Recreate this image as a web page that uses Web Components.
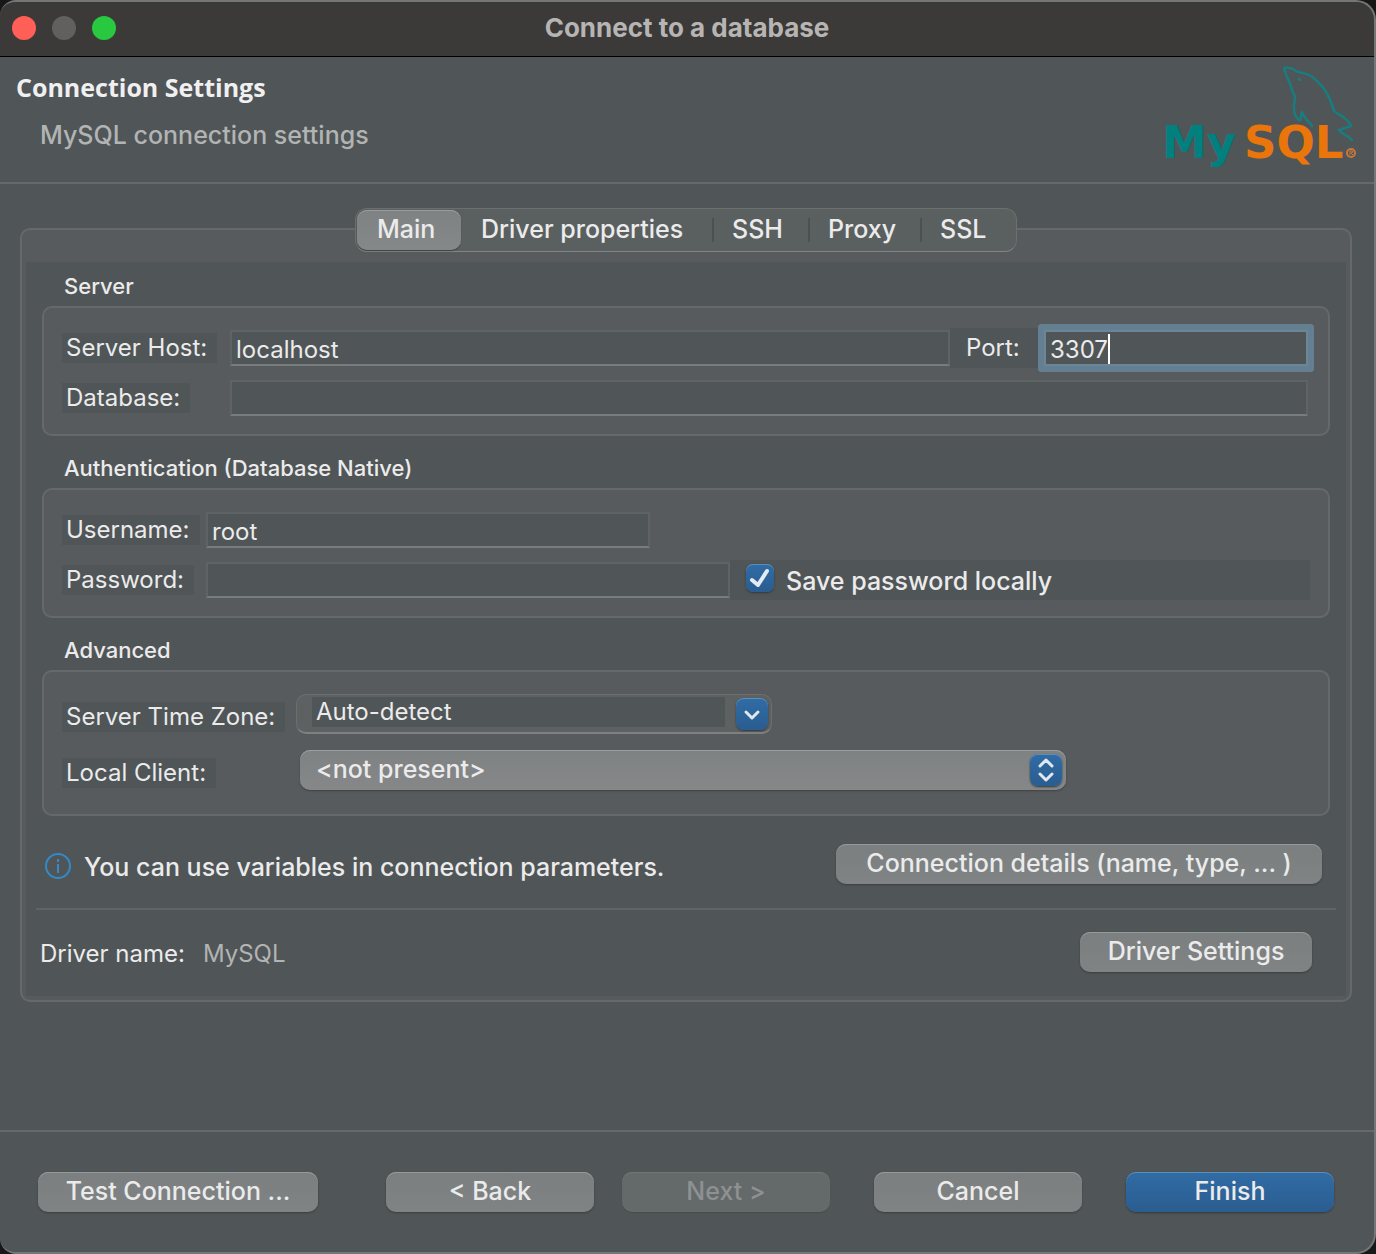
<!DOCTYPE html>
<html lang="en">
<head>
<meta charset="utf-8">
<title>Connect to a database</title>
<style>
  :root {
    --bg: #505557;
    --raised: #575b5d;
    --line: #65696b;
    --text: #ebebeb;
    --muted: #b2b4b4;
    --blue-a: #306ca5;
    --blue-b: #2a5d90;
    --fs-title: 26px;
    --fs-body: 25px;
    --fs-label: 24px;
    --fs-caption: 22px;
  }
  html, body { margin: 0; min-height: 100vh; background: #181818; }
  body { font-family: Inter, "Liberation Sans", sans-serif; font-weight: 500; color: var(--text); font-size: var(--fs-body); }
</style>
</head>
<body>
<dialog-window heading="Connect to a database">
  <page-banner slot="banner" heading="Connection Settings" note="MySQL connection settings"></page-banner>

  <tab-folder>
    <tab-item slot="tabs" selected style="--w:104px">Main</tab-item>
    <tab-item slot="tabs" style="--w:251px">Driver properties</tab-item>
    <tab-item slot="tabs" divided style="--w:96px">SSH</tab-item>
    <tab-item slot="tabs" divided style="--w:112px">Proxy</tab-item>
    <tab-item slot="tabs" divided style="--w:96px">SSL</tab-item>

    <field-group caption="Server" style="--label-col:168px">
      <field-row>
        <text-field label="Server Host:" value="localhost" style="flex:1"></text-field>
        <text-field strip focused label="Port:" value="3307" style="--label-col:94px;flex:0 0 358px"></text-field>
      </field-row>
      <field-row>
        <text-field label="Database:" value="" style="flex:1"></text-field>
      </field-row>
    </field-group>

    <field-group caption="Authentication (Database Native)" style="--label-col:144px">
      <field-row>
        <text-field label="Username:" value="root" style="flex:0 0 588px"></text-field>
      </field-row>
      <field-row>
        <text-field label="Password:" type="password" value="" style="flex:0 0 668px"></text-field>
        <check-field checked label="Save password locally"></check-field>
      </field-row>
    </field-group>

    <field-group caption="Advanced" style="--pad-top:22px;--pad-bottom:24px;--row-gap:16px">
      <field-row>
        <select-field kind="combo" label="Server Time Zone:" option="Auto-detect" style="--label-col:234px;flex:0 0 710px"></select-field>
      </field-row>
      <field-row>
        <select-field kind="popup" label="Local Client:" option="&lt;not present&gt;" style="--label-col:238px;flex:0 0 1004px"></select-field>
      </field-row>
    </field-group>

    <info-row>
      You can use variables in connection parameters.
      <push-button slot="action" style="--w:486px">Connection details (name, type, ... )</push-button>
    </info-row>
    <driver-row name="Driver name:" value="MySQL">
      <push-button style="--w:232px">Driver Settings</push-button>
    </driver-row>
  </tab-folder>

  <button-bar slot="footer">
    <push-button slot="start" style="--w:280px">Test Connection ...</push-button>
    <push-button slot="nav" style="--w:208px">&lt; Back</push-button>
    <push-button slot="nav" disabled style="--w:208px">Next &gt;</push-button>
    <push-button style="--w:208px">Cancel</push-button>
    <push-button primary style="--w:208px">Finish</push-button>
  </button-bar>
</dialog-window>

<script>
const reset = '*{box-sizing:border-box}button,input,select{font:inherit;color:inherit;margin:0}';

function define(name, render) {
  customElements.define(name, class extends HTMLElement {
    constructor() {
      super();
      this.attachShadow({ mode: 'open' });
    }
    connectedCallback() {
      const attr = key => (this.getAttribute(key) || '').replace(/&/g, '&amp;').replace(/</g, '&lt;').replace(/"/g, '&quot;');
      this.shadowRoot.innerHTML = render(attr, this);
    }
  });
}

define('dialog-window', a => `
  <style>${reset}
    :host{display:flex;flex-direction:column;box-sizing:border-box;min-height:100vh;background:var(--bg);
      border:solid #747777;border-width:2px 2px 2px 0;border-radius:16px 20px 20px 16px;overflow:hidden}
    header{display:grid;grid-template-columns:1fr auto 1fr;align-items:center;height:55px;padding:0 12px 3px;
      background:#3c3a38;border-bottom:1px solid #000}
    .lights{display:flex;gap:16px}
    .lights button{width:24px;height:24px;border:0;padding:0;border-radius:50%;background:var(--c)}
    h1{margin:0;font-size:var(--fs-title);line-height:32px;font-weight:700;color:#b7b5b4}
    main{flex:1;padding:24px 22px 24px 20px}
  </style>
  <header>
    <div class="lights">
      <button aria-label="Close" style="--c:#ff5f57"></button>
      <button aria-label="Minimize" disabled style="--c:#60605e"></button>
      <button aria-label="Zoom" style="--c:#28c840"></button>
    </div>
    <h1>${a('heading')}</h1>
  </header>
  <slot name="banner"></slot>
  <main><slot></slot></main>
  <slot name="footer"></slot>`);

define('page-banner', a => `
  <style>${reset}
    :host{display:flex;justify-content:space-between;height:127px;box-sizing:border-box;padding:8px 16px 0 16px;border-bottom:2px solid var(--line)}
    h2{margin:6px 0 0;font:700 var(--fs-body)/32px "Open Sans","Noto Sans",sans-serif;color:#f0f0f0}
    p{margin:16px 0 0 24px;font-size:var(--fs-body);line-height:32px;color:var(--muted)}
    svg{display:block;flex:none}
    text{font:700 45px "DejaVu Sans",sans-serif}
  </style>
  <div><h2>${a('heading')}</h2><p>${a('note')}</p></div>
  <svg width="200" height="106" viewBox="1158 65 200 106" role="img" aria-label="MySQL logo">
    <g fill="none" stroke="#1a7c7e" stroke-width="2.6" stroke-linejoin="round" stroke-linecap="round">
      <path d="M1285 71C1282 68 1286 67 1289 68C1293 68 1295 71 1298 72C1306 73 1312 76 1316 80C1326 89 1330 98 1334 111C1340 116 1347 117 1351 126L1339 130C1341 134 1348 135 1352 140"/>
      <path d="M1285 71C1287 79 1291 83 1292 90C1293 94 1296 95 1295 99C1293 107 1294 114 1297 118C1301 123 1300 120 1302 112C1305 120 1309 121 1312 126"/>
      <path d="M1299 79L1300 80"/>
    </g>
    <text x="1162" y="158" fill="#00807f">My</text>
    <text x="1244" y="158" fill="#e9750b">SQL</text>
    <g stroke="#c87838" fill="none" stroke-width="2"><circle cx="1351" cy="153" r="4"/><path d="M1350 155v-4h2l1 1-2 1 2 2" stroke-width="1"/></g>
  </svg>`);

define('tab-folder', () => `
  <style>${reset}
    :host{display:flex;flex-direction:column;align-items:center}
    nav{display:flex;position:relative;height:44px;padding:1px 0 1px 1px;background:#5a5f60;border:1px solid #6b6f70;border-bottom-color:#808485;border-radius:12px}
    .panel{align-self:stretch;margin-top:-24px;padding:32px 4px 4px;background:var(--raised);border:2px solid var(--line);border-radius:10px}
    .page{background:var(--bg);padding:8px 10px 24px}
  </style>
  <nav role="tablist"><slot name="tabs"></slot></nav>
  <div class="panel"><div class="page" role="tabpanel"><slot></slot></div></div>`);

define('tab-item', (a, el) => `
  <style>${reset}
    :host{display:flex;align-items:center;width:var(--w)}
    :host([divided])::before{content:"";width:2px;height:24px;margin-right:-2px;background:#4b5051}
    button{flex:1;height:40px;padding:0 0 2px 20px;border:0;border-radius:10px;background:none;text-align:left;white-space:nowrap;line-height:32px}
    :host([selected]) button{background:linear-gradient(#7f8283,#858889);box-shadow:0 1px 1px #3e4243,inset 0 1px #9a9c9d}
  </style>
  <button role="tab" aria-selected="${el.hasAttribute('selected')}"><slot></slot></button>`);

define('field-group', a => `
  <style>${reset}
    :host{display:block;padding:0 6px}
    fieldset{margin:0;padding:0;border:0;min-width:0}
    legend{padding:4px 22px 8px;font-size:var(--fs-caption);line-height:24px;height:36px}
    :host(:not(:first-of-type)) legend{height:52px;padding-top:20px}
    .box{display:flex;flex-direction:column;gap:var(--row-gap,10px);padding:var(--pad-top,20px) 20px var(--pad-bottom,16px) 18px;
      background:var(--raised);border:2px solid var(--line);border-radius:10px}
  </style>
  <fieldset><legend>${a('caption')}</legend><div class="box"><slot></slot></div></fieldset>`);

define('field-row', () => `
  <style>:host{display:flex;align-items:center;height:40px}</style><slot></slot>`);

const labelStyles = `
    .cell{flex:0 0 var(--label-col);display:flex}
    label{font-size:var(--fs-label);font-weight:400;line-height:30px;padding:0 10px 0 4px;background:var(--bg);white-space:nowrap}`;

define('text-field', (a, el) => `
  <style>${reset}${labelStyles}
    :host{display:flex;align-items:center;height:40px;min-width:0}
    :host([strip]) .cell{background:var(--bg);padding-left:12px;height:40px;align-items:center}
    .box{position:relative;flex:1;min-width:0;display:flex}
    input{width:100%;height:36px;padding:2px 4px 0;font-size:var(--fs-label);font-weight:400;line-height:32px;background:var(--bg);
      border:2px solid #5e6364;border-bottom-color:#777c7d;border-radius:0;outline:0}
    :host([focused]) .box{box-shadow:0 0 0 6px #647f91;border-radius:1px}
    :host([focused]) input{border-color:#6b8797}
    .caret{position:absolute;left:64px;top:4px;width:2px;height:30px;background:#fff}
  </style>
  <div class="cell"><label for="f">${a('label')}</label></div>
  <div class="box"><input id="f" type="${a('type') || 'text'}" value="${a('value')}">${el.hasAttribute('focused') ? '<span class="caret"></span>' : ''}</div>`);

define('check-field', (a, el) => `
  <style>${reset}
    :host{flex:1;display:flex;align-items:center;height:40px;padding-left:16px;margin-right:-2px;background:var(--bg)}
    .mark{position:relative;width:28px;height:28px;margin-bottom:4px}
    input{appearance:none;display:block;width:28px;height:28px;border-radius:7px;background:#747879}
    input:checked{background:linear-gradient(var(--blue-a),var(--blue-b));box-shadow:0 1px 2px #34383a,inset 0 1px #5e8db8}
    svg{position:absolute;inset:0;pointer-events:none}
    label{padding:2px 0 0 12px;line-height:32px;white-space:nowrap}
  </style>
  <span class="mark"><input id="c" type="checkbox" ${el.hasAttribute('checked') ? 'checked' : ''}>
    <svg width="28" height="28" fill="none" stroke="#e4ebf2" stroke-width="4" stroke-linecap="round" stroke-linejoin="round"><path d="M6 16L12 21L21 7"/></svg></span>
  <label for="c">${a('label')}</label>`);

define('select-field', (a, el) => {
  const arrows = el.getAttribute('kind') === 'combo'
    ? '<path d="M10 14L16 20L22 14"/>'
    : '<path d="M10 12L16 6L22 12M10 20L16 26L22 20"/>';
  return `
  <style>${reset}${labelStyles}
    :host{display:flex;align-items:center;height:40px}
    label{margin-top:5px}
    .box{position:relative;flex:1;display:flex;align-items:center;height:40px;border-radius:10px}
    select{appearance:none;width:100%;border:0;outline:0;border-radius:0;background:none;line-height:30px}
    :host([kind=combo]) .box{background:#5d6162;border:1px solid #6a6e6f;border-bottom:2px solid #7d8182;padding:1px 46px 4px 15px}
    :host([kind=combo]) select{height:30px;padding:0 4px;background:var(--bg);font-size:var(--fs-label);font-weight:400}
    :host([kind=popup]) .box{background:linear-gradient(#7f8283,#858788);box-shadow:0 1px 2px #3e4243,inset 0 1px #9c9e9f}
    :host([kind=popup]) select{height:40px;padding:0 44px 2px 16px}
    svg{position:absolute;right:3px;top:3px;width:32px;height:32px;border-radius:8px;pointer-events:none;
      background:linear-gradient(var(--blue-a),var(--blue-b));box-shadow:0 1px 2px #34383a,inset 0 1px #5e8db8;
      fill:none;stroke:#dfe8f1;stroke-width:3;stroke-linecap:round;stroke-linejoin:round}
    :host([kind=popup]) svg{right:4px;top:4px}
  </style>
  <div class="cell"><label for="s">${a('label')}</label></div>
  <div class="box"><select id="s"><option>${a('option')}</option></select><svg viewBox="0 0 32 32">${arrows}</svg></div>`;
});

define('info-row', () => `
  <style>${reset}
    :host{display:flex;align-items:center;margin-top:28px;padding:0 14px 24px 8px;border-bottom:2px solid #5f6566}
    svg{flex:none;margin:4px 12px 0 0}
    p{flex:1;margin:6px 0 0;line-height:32px;white-space:nowrap}
  </style>
  <svg width="28" height="28" fill="none" stroke="#3489c8" stroke-width="2"><circle cx="14" cy="14" r="12"/><path d="M14 12v9M14 7v3"/></svg>
  <p><slot></slot></p><slot name="action"></slot>`);

define('driver-row', a => `
  <style>${reset}
    :host{display:flex;align-items:center;margin-top:22px;padding:0 24px 0 4px}
    dl{flex:1;display:flex;gap:18px;margin:4px 0 0;line-height:32px;font-size:var(--fs-label);font-weight:400}
    dd{margin:0;color:var(--muted)}
  </style>
  <dl><dt>${a('name')}</dt><dd>${a('value')}</dd></dl><slot></slot>`);

define('push-button', (a, el) => `
  <style>${reset}
    :host{display:block;width:var(--w)}
    button{display:block;width:100%;height:40px;padding:0 0 2px;border:0;border-radius:10px;line-height:32px;font-size:var(--fs-body);white-space:nowrap;
      background:linear-gradient(#7b7f80,#808384);box-shadow:0 1px 2px #3a3e40,inset 0 1px #989b9c}
    :host([disabled]) button{background:#64696a;color:#8d9192;box-shadow:0 1px 1px #484c4e,inset 0 1px #727677}
    :host([primary]) button{background:linear-gradient(var(--blue-a),var(--blue-b));box-shadow:0 1px 2px #34383a,inset 0 1px #5e8db8}
  </style>
  <button ${el.hasAttribute('disabled') ? 'disabled' : ''}><slot></slot></button>`);

define('button-bar', () => `
  <style>${reset}
    :host{display:flex;gap:44px;padding:40px 40px 40px 38px;border-top:2px solid var(--line)}
    .nav{display:flex;gap:28px;margin-left:auto}
  </style>
  <slot name="start"></slot><div class="nav"><slot name="nav"></slot></div><slot></slot>`);
</script>
</body>
</html>
